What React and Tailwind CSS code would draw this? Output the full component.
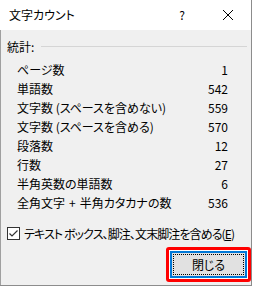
import React from "react";

const rows = [
  ["ページ数", "1"],
  ["単語数", "542"],
  ["文字数 (スペースを含めない)", "559"],
  ["文字数 (スペースを含める)", "570"],
  ["段落数", "12"],
  ["行数", "27"],
  ["半角英数の単語数", "6"],
  [
    <>
      全角文字<span className="mx-[4px]">+</span>半角カタカナの数
    </>,
    "536",
  ],
];

export default function App() {
  return (
    <div
      className="w-[252px] h-[286px] bg-white border-r border-b border-[#8c8c8c] flex flex-col text-[12px] text-black [font-feature-settings:'palt'] leading-none"
      style={{ fontFamily: '"Noto Sans CJK JP", "Noto Sans", sans-serif' }}
    >
      <div className="h-[30px] flex items-center bg-white shrink-0">
        <div className="pl-[9px] flex-1">文字カウント</div>
        <div className="w-[10px] text-center mr-[35px]">?</div>
        <svg width="12" height="12" viewBox="0 0 12 12" className="mr-[17px]">
          <path d="M1 1 L11 11 M11 1 L1 11" stroke="#000" strokeWidth="1" />
        </svg>
      </div>
      <div className="flex-1 bg-[#f0f0f0] border-l border-[#a0a0a0] flex flex-col">
        <div className="mt-[8px] h-[18px] flex items-center pl-[6px] pr-[4px]">
          <span>統計:</span>
          <div className="flex-1 h-px bg-[#d5d5d5] ml-[7px] mt-[-2px]" />
        </div>
        <div className="mt-[4px] flex flex-col pl-[16px] w-[227px]">
          {rows.map(([l, v]) => (
            <div key={v} className="h-[19px] flex items-center justify-between">
              <span className="whitespace-pre">{l}</span>
              <span>{v}</span>
            </div>
          ))}
        </div>
        <div className="mt-[15px] flex items-center pl-[6px] h-[13px]">
          <svg width="13" height="13" viewBox="0 0 13 13" className="shrink-0">
            <rect x="0.5" y="0.5" width="12" height="12" fill="#fff" stroke="#333" />
            <path d="M2.5 6.5 L5 9 L10.5 3.5" fill="none" stroke="#333" strokeWidth="1.2" />
          </svg>
          <span className="ml-[4px] whitespace-nowrap tracking-[-0.9px]">
            テキスト ボックス、脚注、文末脚注を含める(<span className="underline">E</span>)
          </span>
        </div>
        <div className="mt-[7px] flex justify-end">
          <div className="w-[85px] h-[35px] border-[3px] border-[#ff0000] rounded-[3px] p-[1px] bg-white">
            <div className="w-full h-full border-2 border-[#0078d7] bg-[#e1e1e1] p-[1px]">
              <div className="w-full h-full border border-dotted border-black flex items-center justify-center">
                閉じる
              </div>
            </div>
          </div>
        </div>
      </div>
    </div>
  );
}
